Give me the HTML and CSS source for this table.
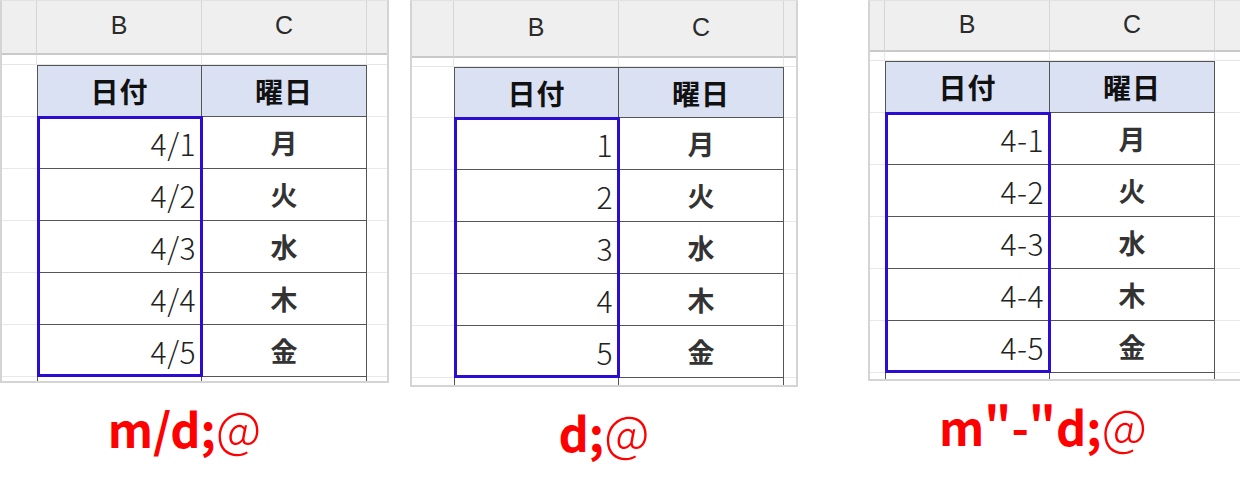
FILE: index.html
```html
<!DOCTYPE html>
<html lang="ja">
<head>
<meta charset="utf-8">
<title>日付の表示形式</title>
<link rel="stylesheet" href="styles.css">
</head>
<body>
<div class="page">
  <div class="panel p1">
    <div class="sheet">
      <div class="ch"></div><div class="ch">B</div><div class="ch">C</div><div class="ch"></div>
      <div class="gp"></div><div class="gp"></div><div class="gp"></div><div class="gp"></div>
      <div class="rh"></div><div class="th first">日付</div><div class="th">曜日</div><div class="tl"></div>
      <div class="rh"></div><div class="td num first"><span class="sel"></span>4/1</div><div class="td wd">月</div><div class="tl"></div>
      <div class="rh"></div><div class="td num first">4/2</div><div class="td wd">火</div><div class="tl"></div>
      <div class="rh"></div><div class="td num first">4/3</div><div class="td wd">水</div><div class="tl"></div>
      <div class="rh"></div><div class="td num first">4/4</div><div class="td wd">木</div><div class="tl"></div>
      <div class="rh"></div><div class="td num first">4/5</div><div class="td wd">金</div><div class="tl"></div>
      <div class="pr"></div><div class="pr pb first"></div><div class="pr pb"></div><div class="pr"></div>
    </div>
    <div class="label">m/d;<span class="at">@</span></div>
  </div>

  <div class="panel p2">
    <div class="sheet">
      <div class="ch"></div><div class="ch">B</div><div class="ch">C</div><div class="ch"></div>
      <div class="gp"></div><div class="gp"></div><div class="gp"></div><div class="gp"></div>
      <div class="rh"></div><div class="th first">日付</div><div class="th">曜日</div><div class="tl"></div>
      <div class="rh"></div><div class="td num first"><span class="sel"></span>1</div><div class="td wd">月</div><div class="tl"></div>
      <div class="rh"></div><div class="td num first">2</div><div class="td wd">火</div><div class="tl"></div>
      <div class="rh"></div><div class="td num first">3</div><div class="td wd">水</div><div class="tl"></div>
      <div class="rh"></div><div class="td num first">4</div><div class="td wd">木</div><div class="tl"></div>
      <div class="rh"></div><div class="td num first">5</div><div class="td wd">金</div><div class="tl"></div>
      <div class="pr"></div><div class="pr pb first"></div><div class="pr pb"></div><div class="pr"></div>
    </div>
    <div class="label">d;<span class="at">@</span></div>
  </div>

  <div class="panel p3">
    <div class="sheet">
      <div class="ch"></div><div class="ch">B</div><div class="ch">C</div><div class="ch"></div>
      <div class="gp"></div><div class="gp"></div><div class="gp"></div><div class="gp"></div>
      <div class="rh"></div><div class="th first">日付</div><div class="th">曜日</div><div class="tl"></div>
      <div class="rh"></div><div class="td num first"><span class="sel"></span>4-1</div><div class="td wd">月</div><div class="tl"></div>
      <div class="rh"></div><div class="td num first">4-2</div><div class="td wd">火</div><div class="tl"></div>
      <div class="rh"></div><div class="td num first">4-3</div><div class="td wd">水</div><div class="tl"></div>
      <div class="rh"></div><div class="td num first">4-4</div><div class="td wd">木</div><div class="tl"></div>
      <div class="rh"></div><div class="td num first">4-5</div><div class="td wd">金</div><div class="tl"></div>
      <div class="pr"></div><div class="pr pb first"></div><div class="pr pb"></div><div class="pr"></div>
    </div>
    <div class="label">m"-"d;<span class="at">@</span></div>
  </div>
</div>
</body>
</html>
```

FILE: styles.css
```css
* { box-sizing: border-box; }

html, body {
  margin: 0;
  padding: 0;
  background: #ffffff;
}

body {
  width: 1240px;
  height: 500px;
  overflow: hidden;
  font-family: "Noto Sans CJK JP", "Noto Sans", sans-serif;
}

.page {
  display: flex;
  align-items: flex-start;
}

.panel {
  display: flex;
  flex-direction: column;
}

.p1 { width: 389px; }
.p2 { width: 388px; margin-left: 21px; }
.p3 { width: 372px; margin-left: 70px; }

.sheet {
  display: grid;
  border: 2px solid #d4d4d4;
  border-top: 1px solid #e2e2e2;
  background: #ffffff;
}

.p1 .sheet {
  grid-template-columns: 35px 165px 165px 1fr;
  grid-template-rows: 54px 10px 52px repeat(5, 52px) 4px;
}

.p2 .sheet {
  grid-template-columns: 42px 165px 165px 1fr;
  grid-template-rows: 57px 9px 51px repeat(5, 52px) 7px;
}

.p3 .sheet {
  border-right: none;
  grid-template-columns: 15px 165px 165px 1fr;
  grid-template-rows: 51px 9px 52px repeat(5, 52px) 6px;
}

/* column header strip */
.ch {
  background: #efefef;
  border-right: 1px solid #d6d6d6;
  border-bottom: 2px solid #c9c9c9;
  display: flex;
  align-items: center;
  justify-content: center;
  font-family: "Liberation Sans", Arial, sans-serif;
  font-size: 25px;
  color: #2b2b2b;
  padding-bottom: 3px;
}
.ch:nth-child(4) { border-right: none; }

/* gap row */
.gp {
  border-right: 1px solid #e6e6e6;
  border-bottom: 1px solid #e6e6e6;
}
.gp:nth-child(8) { border-right: none; }

/* row header & tail columns */
.rh, .tl {
  border-bottom: 1px solid #e8e8e8;
}
.pb {
  border-right: 1px solid #555555;
}
.pb.first { border-left: 1px solid #555555; }

/* table header */
.th {
  background: #d9e1f2;
  border-top: 1px solid #555555;
  border-right: 1px solid #555555;
  border-bottom: 1px solid #555555;
  display: flex;
  align-items: center;
  justify-content: center;
  font-size: 28px;
  font-weight: 700;
  color: #111111;
  letter-spacing: 1px;
}
.th.first { border-left: 1px solid #555555; }

/* table body */
.td {
  border-right: 1px solid #555555;
  border-bottom: 1px solid #555555;
  display: flex;
  align-items: center;
  color: #333333;
}
.td.first { border-left: 1px solid #555555; position: relative; }

.num {
  justify-content: flex-end;
  padding-right: 5px;
  font-size: 30px;
  font-weight: 300;
  color: #222222;
  letter-spacing: 0.5px;
}

.wd {
  justify-content: center;
  font-size: 27px;
  font-weight: 700;
}

.sel {
  position: absolute;
  left: -1px;
  top: -1px;
  width: 166px;
  height: 261px;
  border: 3px solid #2a0cd2;
  z-index: 2;
}

/* labels */
.label {
  margin-top: 13px;
  text-align: center;
  font-family: "Noto Sans CJK JP", "Noto Sans", sans-serif;
  font-size: 47px;
  font-weight: 700;
  color: #ff0000;
  line-height: 60px;
  white-space: nowrap;
}
.p1 .label { padding-right: 20px; }
.p3 .label { padding-right: 22px; }

.at {
  font-weight: 300;
  font-size: 50px;
}
```
